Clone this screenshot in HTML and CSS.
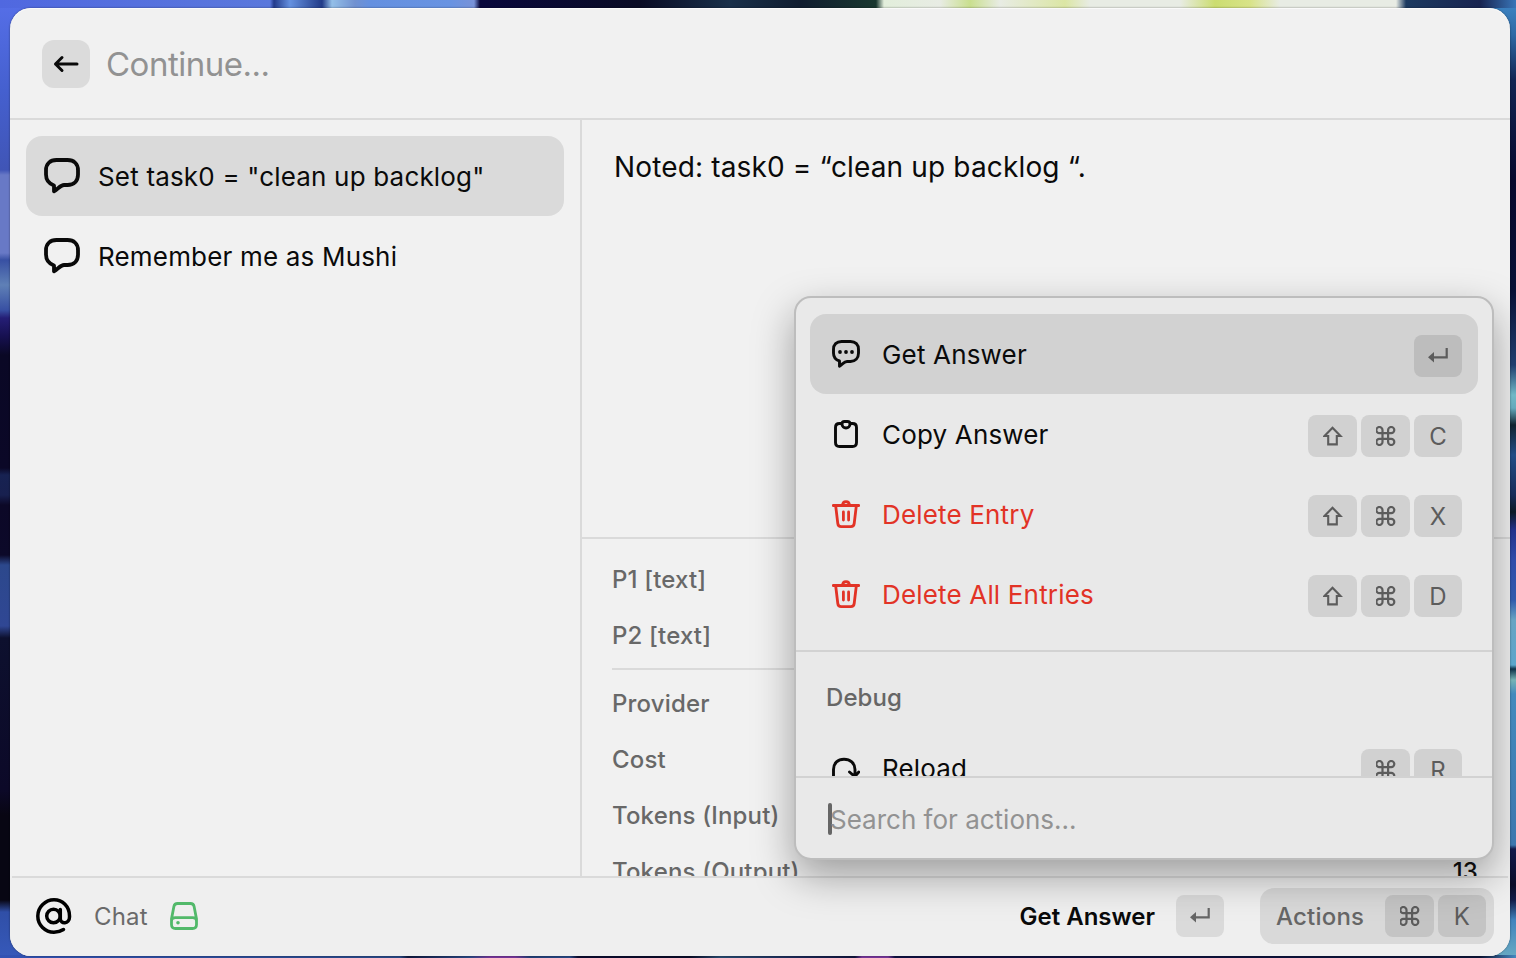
FILE: index.html
```html
<!DOCTYPE html>
<html lang="en">
<head>
<meta charset="utf-8">
<title>Chat</title>
<link rel="stylesheet" href="styles.css">
</head>
<body>
<svg class="defs" width="0" height="0">
  <symbol id="bubble" viewBox="0 0 36 36"><path d="M12.500 2h11C30 2 34 6 34 12v4.500c0 6.500-4 10.500-10.500 10.500H20c-3.500 0-6 4-10 6.300V27.500C4.500 25.500 2 22 2 16.500V12C2 6 6 2 12.500 2Z" fill="none" stroke="currentColor" stroke-width="3.800" stroke-linejoin="round"/></symbol>
  <symbol id="cmd" viewBox="0 0 20 20"><path d="M7.200 4.100a3.100 3.100 0 1 0-3.100 3.100h11.800a3.100 3.100 0 1 0-3.100-3.100v11.800a3.100 3.100 0 1 0 3.100-3.100H4.100a3.100 3.100 0 1 0 3.100 3.100Z" transform="translate(-.7 0)" fill="none" stroke="currentColor" stroke-width="2.200"/></symbol>
  <symbol id="shift" viewBox="0 0 20 20"><path d="M10 1.700 18 10h-3.700v8.400H5.700V10H2Z" transform="translate(-.5 0)" fill="none" stroke="currentColor" stroke-width="2.100"/></symbol>
  <symbol id="enter" viewBox="0 0 20 16"><path d="M18.700 0v9.300H5" fill="none" stroke="currentColor" stroke-width="2.200"/><path d="M0 9.300 6 4v10.600Z" fill="currentColor"/></symbol>
  <symbol id="trash" viewBox="0 0 28 28"><path d="M1.300 5.500h25.400M3.700 6l2.100 17.500Q6.200 26.600 9.200 26.600h9.600q3 0 3.400-3.100L24.300 6M10.500 5.500c.2-5.300 6.800-5.300 7 0M11.400 12v8M16.600 12v8" fill="none" stroke="currentColor" stroke-width="2.800" stroke-linecap="round" stroke-linejoin="round"/></symbol>
</svg>
<main class="window">
  <header class="topbar">
    <button class="back"><svg width="26" height="18" viewBox="0 0 26 18"><path d="M24 9H2.500M9 2.500 2.500 9 9 15.500" fill="none" stroke="currentColor" stroke-width="3" stroke-linecap="round" stroke-linejoin="round"/></svg></button>
    <span class="prompt">Continue...</span>
  </header>
  <section class="content">
    <nav class="list">
      <div class="entry selected"><svg width="36" height="36"><use href="#bubble"/></svg><span>Set task0 = "clean up backlog"</span></div>
      <div class="entry"><svg width="36" height="36"><use href="#bubble"/></svg><span>Remember me as Mushi</span></div>
    </nav>
    <article class="detail">
      <div class="answer"><span>Noted: task0 = “clean up backlog “.</span></div>
      <div class="meta">
        <div class="row"><span>P1 [text]</span></div>
        <div class="row"><span>P2 [text]</span></div>
        <div class="rule"></div>
        <div class="row"><span>Provider</span></div>
        <div class="row"><span>Cost</span></div>
        <div class="row"><span>Tokens (Input)</span></div>
        <div class="row"><span>Tokens (Output)</span><span class="value">13</span></div>
      </div>
    </article>
  </section>
  <footer class="bottombar">
    <svg class="at" width="38" height="38" viewBox="0 0 38 38"><g fill="none" stroke="currentColor" stroke-width="3.500" stroke-linecap="round"><circle cx="18.500" cy="19" r="6.800"/><path d="M25.300 12.500v9.300c0 5.700 9.200 5.500 9.200-1.800v-1C34.500 9.500 27.500 2.800 19 2.800S2.800 10 2.800 19 10 35.200 19 35.200c3.500 0 6.700-.9 9.500-2.700"/></g></svg>
    <span class="mode">Chat</span>
    <svg class="drive" width="28" height="28" viewBox="0 0 28 28"><path d="M7.500 1.500h13q3 0 3.600 3L26.500 17v5.500q0 4-4 4h-17q-4 0-4-4V17L3.900 4.500Q4.500 1.500 7.500 1.500ZM1.500 19.500q0-3.800 4-3.800h17q4 0 4 3.800" fill="none" stroke="currentColor" stroke-width="2.800"/><circle cx="8" cy="20.800" r="1.800" fill="currentColor"/></svg>
    <span class="primary">Get Answer</span>
    <kbd class="key last"><svg width="20" height="16"><use href="#enter"/></svg></kbd>
    <button class="actions"><span>Actions</span><kbd class="key"><svg width="20" height="20"><use href="#cmd"/></svg></kbd><kbd class="key last">K</kbd></button>
  </footer>
</main>
<aside class="menu">
  <div class="scroll">
    <div class="action selected"><svg class="icon" width="28" height="28" viewBox="0 0 28 28"><path d="M9.500 1.500h9c5 0 8 3 8 8V13c0 5-3 8.500-8 8.500H15c-3 0-4.500 3-7.500 4.700V21C3.500 19.800 1.500 17 1.500 13V9.500c0-5 3-8 8-8Z" fill="none" stroke="currentColor" stroke-width="2.900" stroke-linejoin="round"/><g fill="currentColor"><circle cx="8" cy="12" r="1.900"/><circle cx="14" cy="12" r="1.900"/><circle cx="20" cy="12" r="1.900"/></g></svg><span class="label">Get Answer</span><kbd class="key last"><svg width="20" height="16"><use href="#enter"/></svg></kbd></div>
    <div class="action"><svg class="icon" width="28" height="28" viewBox="0 0 28 28"><g fill="none" stroke="currentColor" stroke-width="2.900" stroke-linejoin="round"><path d="M10 3.500H7.500q-4 0-4 4v15q0 4 4 4h13q4 0 4-4v-15q0-4-4-4H18"/><path d="M10 4q0-2.500 2.500-2.500h3Q18 1.500 18 4c0 5.300-8 5.300-8 0Z"/></g></svg><span class="label">Copy Answer</span><kbd class="key"><svg width="20" height="20"><use href="#shift"/></svg></kbd><kbd class="key"><svg width="20" height="20"><use href="#cmd"/></svg></kbd><kbd class="key last">C</kbd></div>
    <div class="action danger"><svg class="icon" width="28" height="28"><use href="#trash"/></svg><span class="label">Delete Entry</span><kbd class="key"><svg width="20" height="20"><use href="#shift"/></svg></kbd><kbd class="key"><svg width="20" height="20"><use href="#cmd"/></svg></kbd><kbd class="key last">X</kbd></div>
    <div class="action danger"><svg class="icon" width="28" height="28"><use href="#trash"/></svg><span class="label">Delete All Entries</span><kbd class="key"><svg width="20" height="20"><use href="#shift"/></svg></kbd><kbd class="key"><svg width="20" height="20"><use href="#cmd"/></svg></kbd><kbd class="key last">D</kbd></div>
    <div class="divider"></div>
    <h2 class="group">Debug</h2>
    <div class="action"><svg class="icon" width="28" height="28" viewBox="0 0 28 28"><path d="M1.500 24V15.500C1.500 9 6 5.200 12 5.200S23 9 23 15.500v6M17.500 18l5.300 4.500 4-4.500" fill="none" stroke="currentColor" stroke-width="2.900" stroke-linecap="round" stroke-linejoin="round"/></svg><span class="label">Reload</span><kbd class="key"><svg width="20" height="20"><use href="#cmd"/></svg></kbd><kbd class="key last">R</kbd></div>
  </div>
  <div class="search"><i class="caret"></i><span>Search for actions...</span></div>
</aside>
</body>
</html>
```

FILE: styles.css
```css
* { box-sizing: border-box; }
body {
  margin: 0;
  width: 1516px;
  height: 958px;
  padding: 8px 6px 2px 10px;
  overflow: hidden;
  position: relative;
  font-family: Inter, "Liberation Sans", sans-serif;
  font-weight: 400;
  color: #0a0a0a;
  background:
    linear-gradient(90deg, #5068e0 0, #5a78dc 270px, #233b8c 274px, #6591e0 290px, #223b88 322px, #93bfe8 332px, #7191d0 355px, #6490e0 370px, #6893e2 450px, #7892d8 474px, #09083d 480px, #0a0c25 640px, #19304a 730px, #101d30 800px, #19372f 876px, #e2eedb 884px, #e8ece4 940px, #c9df8e 970px, #e8ece4 1000px, #dbe6a4 1065px, #e8ece4 1090px, #e8ece4 1180px, #cbdd70 1215px, #d8e388 1250px, #e8ece4 1280px, #e8ece4 1396px, #1c3a60 1406px, #182450 1480px, #3975b8 1516px) 0 0 / 100% 8px no-repeat,
    linear-gradient(90deg, #3252b4 0, #294884 400px, #101940 408px, #294884 470px, #76369a 490px, #76369a 515px, #223f78 530px, #294884 570px, #0c0c30 578px, #0a0c28 690px, #284a70 720px, #1b2856 800px, #11153d 855px, #76369a 862px, #76369a 888px, #101142 895px, #0c1437 1480px, #4588c0 1516px) 0 100% / 100% 3px no-repeat,
    linear-gradient(#566fe8 0, #4560cf 90px, #4055b6 170px, #6879c6 175px, #6879c6 253px, #3850a3 260px, #5f80b6 285px, #3850a3 310px, #251e76 318px, #16104f 337px, #0a0825 355px, #0b0827 468px, #172252 475px, #18204f 495px, #0c0827 505px, #0c0929 555px, #2c488c 565px, #304794 626px, #0d102e 638px, #0c0928 790px, #080613 815px, #080613 900px, #304fa7 912px, #3659ba 958px) 0 0 / 32px 100% no-repeat,
    linear-gradient(#3f87c7 0, #2e69a4 35px, #122553 80px, #07082c 180px, #091035 290px, #203e6e 365px, #70b8c6 395px, #64a9bc 408px, #102330 425px, #234d86 455px, #172b58 495px, #0c1926 512px, #22328b 530px, #304ca9 560px, #315bac 600px, #68a4c3 620px, #5ca5cb 665px, #0d3148 669px, #76b3b5 680px, #438abd 694px, #3d77ae 845px, #11194a 849px, #0b0d29 885px, #121c49 900px, #4283bd 920px, #69abc3 958px) 100% 0 / 30px 100% no-repeat,
    #182654;
}
.defs { position: absolute; }
svg { display: block; flex: none; }
button { border: 0; font: inherit; color: inherit; padding: 0; }
.window {
  height: 948px;
  display: flex;
  flex-direction: column;
  background: #f1f1f1;
  border-radius: 21px;
  overflow: hidden;
  box-shadow: 0 0 2px rgba(0,0,0,.5), inset 0 1px 0 #fafafa;
}
.topbar {
  height: 112px;
  flex: none;
  display: flex;
  align-items: center;
  gap: 16px;
  padding-left: 32px;
  border-bottom: 2px solid #dadada;
}
.back {
  width: 48px; height: 48px;
  border-radius: 12px;
  background: #dbdbdb;
  display: grid;
  place-items: center;
}
.topbar .back { margin-top: 2px; }
.prompt { font-size: 33px; letter-spacing: -.5px; color: #929292; margin-top: 2px; }
.content { height: 756px; flex: none; display: flex; }
.list { width: 570px; padding: 16px; flex: none; }
.entry {
  width: 538px; height: 80px;
  border-radius: 16px;
  display: flex;
  align-items: center;
  padding-left: 18px;
  gap: 18px;
  font-size: 26px;
  letter-spacing: .18px;
}
.list .selected { background: #dadada; }
.detail { flex: 1; border-left: 2px solid #dadada; overflow: hidden; }
.answer { height: 419px; padding: 29px 32px; border-bottom: 2px solid #dadada; font-size: 28px; line-height: 36px; letter-spacing: .15px; }
.meta { padding: 12px 32px 0 30px; height: 337px; overflow: hidden; font-size: 24px; font-weight: 500; color: #686868; letter-spacing: .16px; }
.row { height: 56px; display: flex; align-items: center; justify-content: space-between; }
.value { color: #111; }
.rule { height: 2px; margin: 5px 0; background: #dadada; }
.bottombar {
  flex: 1;
  display: flex;
  align-items: center;
  padding: 0 16px 0 25px;
  background: linear-gradient(#dadada, #dadada) 2px 0 / 1496px 2px no-repeat, #efefef;
  font-size: 24px;
}
.at { color: #000; }
.mode { margin-left: 21px; color: #6a6a6a; letter-spacing: .15px; }
.drive { margin-left: 22px; color: #52b96a; }
.primary { margin-left: auto; font-weight: 600; margin-right: 21px; }
.key {
  width: 49px; height: 42px;
  border-radius: 8px;
  display: flex;
  align-items: center;
  justify-content: center;
  flex: none;
  background: #d1d1d1;
  color: #5c5c5c;
  font: 400 24px Inter, sans-serif;
}
.last { width: 48px; }
.bottombar > .key { background: #dadada; color: #666; }
.actions {
  height: 56px; width: 234px;
  margin-left: 36px;
  padding: 0 8px 0 16px;
  border-radius: 14px;
  background: #d9d9d9;
  display: flex;
  align-items: center;
  gap: 4px;
  font-weight: 500;
  letter-spacing: .2px;
  color: #666;
}
.actions span { margin-right: auto; }
.actions .key { background: #c4c4c4; }
.menu {
  position: absolute;
  left: 794px; top: 296px;
  width: 700px; height: 564px;
  border: 2px solid #bdbdbd;
  border-radius: 17px;
  background: #e9e9e9;
  box-shadow: 0 16px 40px rgba(0,0,0,.35);
  clip-path: path("M-794 -288H695Q716 -288 716 -267V639Q716 660 695 660H-794Z");
}
.scroll { height: 478px; overflow: hidden; padding-top: 16px; }
.action {
  height: 80px;
  margin: 0 14px;
  padding: 0 16px 0 22px;
  border-radius: 16px;
  display: flex;
  align-items: center;
  gap: 4px;
  font-size: 26px;
  letter-spacing: .17px;
}
.action .label { margin-left: 18px; margin-right: auto; }
.action .key { margin-top: 4px; }
.menu .selected { background: #d2d2d2; }
.menu .selected .key { background: #bdbdbd; }
.danger { color: #e23326; }
.divider { height: 2px; margin-top: 16px; background: #d2d2d2; }
.group { height: 76px; margin: 0; padding: 16px 30px 0; font-size: 24px; line-height: 60px; font-weight: 500; color: #666; letter-spacing: .1px; }
.search { height: 82px; border-top: 2px solid #d2d2d2; display: flex; align-items: center; padding: 2px 0 0 32px; font-size: 26px; letter-spacing: 0; color: #929292; }
.caret { width: 4px; height: 32px; border-radius: 2px; background: #666; margin-right: -2px; }
```
